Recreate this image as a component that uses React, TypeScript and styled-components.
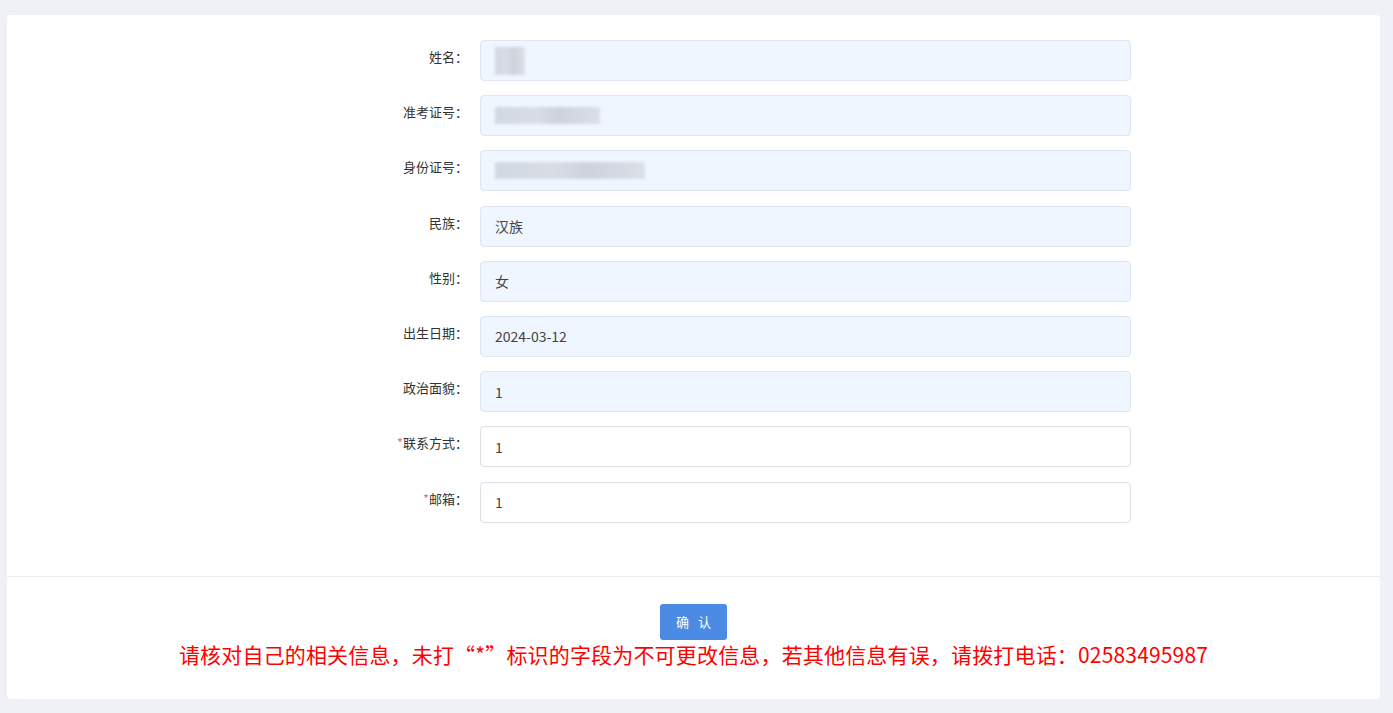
import React from "react";
import styled, { createGlobalStyle } from "styled-components";

const GlobalStyle = createGlobalStyle`
  html, body {
    margin: 0;
    padding: 0;
    background: #f0f1f6;
    font-family: "Noto Sans CJK SC", "Noto Sans", sans-serif;
  }
  * { box-sizing: border-box; }
`;

type Field = {
  label: string;
  value?: string;
  required?: boolean;
  blur?: number;
};

const fields: Field[] = [
  { label: "姓名", blur: 30 },
  { label: "准考证号", blur: 105 },
  { label: "身份证号", blur: 150 },
  { label: "民族", value: "汉族" },
  { label: "性别", value: "女" },
  { label: "出生日期", value: "2024-03-12" },
  { label: "政治面貌", value: "1" },
  { label: "联系方式", value: "1", required: true },
  { label: "邮箱", value: "1", required: true },
];

export default function App() {
  return (
    <>
      <GlobalStyle />
      <Page>
        <Card>
          <Form>
            {fields.map((f) => (
              <Row key={f.label}>
                <Label>
                  {f.required && <Star>*</Star>}
                  {f.label}：
                </Label>
                <Input $editable={!!f.required}>
                  {f.blur ? (
                    <Blurred style={{ width: f.blur }} $tall={f.label === "姓名"} />
                  ) : (
                    f.value
                  )}
                </Input>
              </Row>
            ))}
          </Form>
          <Footer>
            <Button>确 认</Button>
            <Notice>
              请核对自己的相关信息，未打“*”标识的字段为不可更改信息，若其他信息有误，请拨打电话：02583495987
            </Notice>
          </Footer>
        </Card>
      </Page>
    </>
  );
}

const Page = styled.div`
  padding: 15px 13px 14px 7px;
`;

const Card = styled.div`
  background: #ffffff;
  border-radius: 4px;
  height: 684px;
  display: flex;
  flex-direction: column;
`;

const Form = styled.div`
  padding: 25px 0 53px;
  display: flex;
  flex-direction: column;
  align-items: center;
  gap: 14.2px;
  border-bottom: 1px solid #ebedf2;
`;

const Row = styled.div`
  display: flex;
  align-items: flex-start;
  width: 875px;
`;

const Label = styled.div`
  width: 224px;
  padding-right: 12px;
  text-align: right;
  font-size: 13px;
  line-height: 34px;
  color: #333333;
`;

const Star = styled.span`
  color: #f56c6c;
`;

const Input = styled.div<{ $editable: boolean }>`
  width: 651px;
  height: 41px;
  border: 1px solid ${(p) => (p.$editable ? "#dcdfe6" : "#dde6f1")};
  border-radius: 4px;
  background: ${(p) => (p.$editable ? "#ffffff" : "#eff6ff")};
  padding: 0 14px;
  display: flex;
  align-items: center;
  font-size: 14px;
  color: #444444;
`;

const Blurred = styled.div<{ $tall: boolean }>`
  height: ${(p) => (p.$tall ? "28px" : "17px")};
  background: linear-gradient(90deg, #cfd5de, #d6dbe3 40%, #c9ced8 60%, #d9dee6);
  filter: blur(1.5px);
  opacity: 0.9;
`;

const Footer = styled.div`
  flex: 1;
  display: flex;
  flex-direction: column;
  align-items: center;
  padding-top: 27px;
`;

const Button = styled.button`
  width: 67px;
  height: 36px;
  border: none;
  border-radius: 3px;
  background: #4b8be3;
  color: #ffffff;
  font-family: "Noto Sans CJK SC", sans-serif;
  font-size: 13px;
  letter-spacing: 3px;
  padding: 0 0 0 3px;
`;

const Notice = styled.div`
  margin-top: -1px;
  color: #ff0000;
  font-size: 21px;
  line-height: 30px;
  letter-spacing: 0.17px;
`;
